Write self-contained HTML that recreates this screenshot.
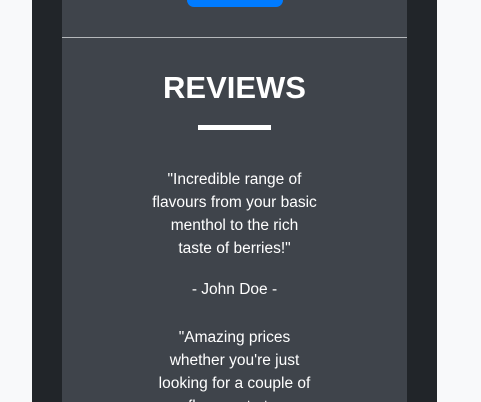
<!DOCTYPE html>
<html><head><style>
html,body{margin:0;padding:0;width:481px;height:402px;overflow:hidden;background:#f8f9fa;font-family:"Liberation Sans",sans-serif;}
.wrap{position:relative;width:481px;height:402px;overflow:hidden;}
.outer{position:absolute;left:32px;top:0;width:405px;height:402px;background:#212529;}
.inner{position:absolute;left:62px;top:0;width:345px;height:402px;background:#3f444b;}
.btn{position:absolute;left:187px;top:-10px;width:96px;height:17px;background:#007bff;border-radius:7px;}
.hr{position:absolute;left:62px;top:37px;width:345px;height:1px;background:#b5b8bb;}
h2{position:absolute;left:62px;width:345px;top:70px;margin:0;text-align:center;color:#fff;font-size:31px;font-weight:bold;line-height:36px;}
.bar{position:absolute;left:198px;top:125px;width:73px;height:5px;background:#fff;}
.l{position:absolute;left:62px;width:345px;text-align:center;color:#fff;font-size:15.5px;line-height:20px;white-space:nowrap;}
</style></head><body><div class="wrap">
<div class="outer"></div><div class="inner"></div>
<div class="btn"></div><div class="hr"></div>
<h2>REVIEWS</h2><div class="bar"></div>
<div class="l" style="top:170px">"Incredible range of</div>
<div class="l" style="top:193px">flavours from your basic</div>
<div class="l" style="top:216px">menthol to the rich</div>
<div class="l" style="top:239px">taste of berries!"</div>
<div class="l" style="top:280px">- John Doe -</div>
<div class="l" style="top:328px">"Amazing prices</div>
<div class="l" style="top:351px">whether you're just</div>
<div class="l" style="top:374px">looking for a couple of</div>
<div class="l" style="top:397px">flavours to try</div>
</div></body></html>
